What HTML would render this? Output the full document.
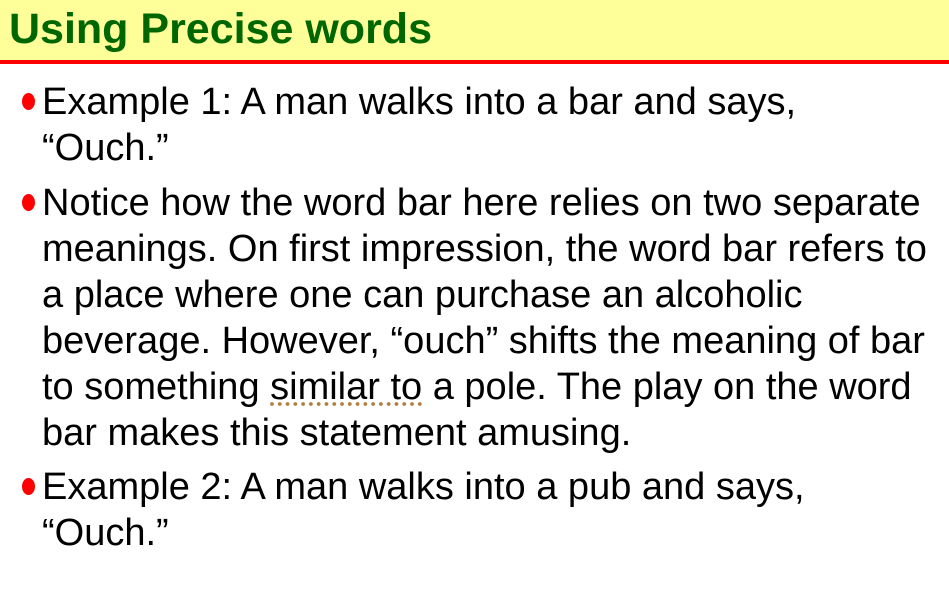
<!DOCTYPE html>
<html><head><style>
body{margin:0;width:949px;height:607px;background:#fff;font-family:"Liberation Sans",Arial,sans-serif;overflow:hidden;position:relative}
.hd{position:absolute;left:0;top:0;width:949px;height:60px;background:#ffff99;border-bottom:4px solid #ff0000}
.hd h1{margin:0;position:absolute;left:9px;top:6px;font-size:43px;font-weight:bold;color:#006600;line-height:46px}
.p{position:absolute;left:42px;font-size:38px;line-height:46px;color:#000;width:907px;white-space:nowrap}
.b{position:absolute;left:22px;width:13px;height:17px;border-radius:50%;background:#f00}
.u{text-decoration:underline dotted #b08040;text-underline-offset:4px}
</style></head><body>
<div class="hd"><h1>Using Precise words</h1></div>
<div class="b" style="top:93px"></div>
<div class="p" style="top:79px">Example 1: A man walks into a bar and says,<br>“Ouch.”</div>
<div class="b" style="top:194px"></div>
<div class="p" style="top:180px">Notice how the word bar here relies on two separate<br>meanings. On first impression, the word bar refers to<br>a place where one can purchase an alcoholic<br>beverage. However, “ouch” shifts the meaning of bar<br>to something <span class="u">similar to</span> a pole. The play on the word<br>bar makes this statement amusing.</div>
<div class="b" style="top:478px"></div>
<div class="p" style="top:464px">Example 2: A man walks into a pub and says,<br>“Ouch.”</div>
</body></html>
